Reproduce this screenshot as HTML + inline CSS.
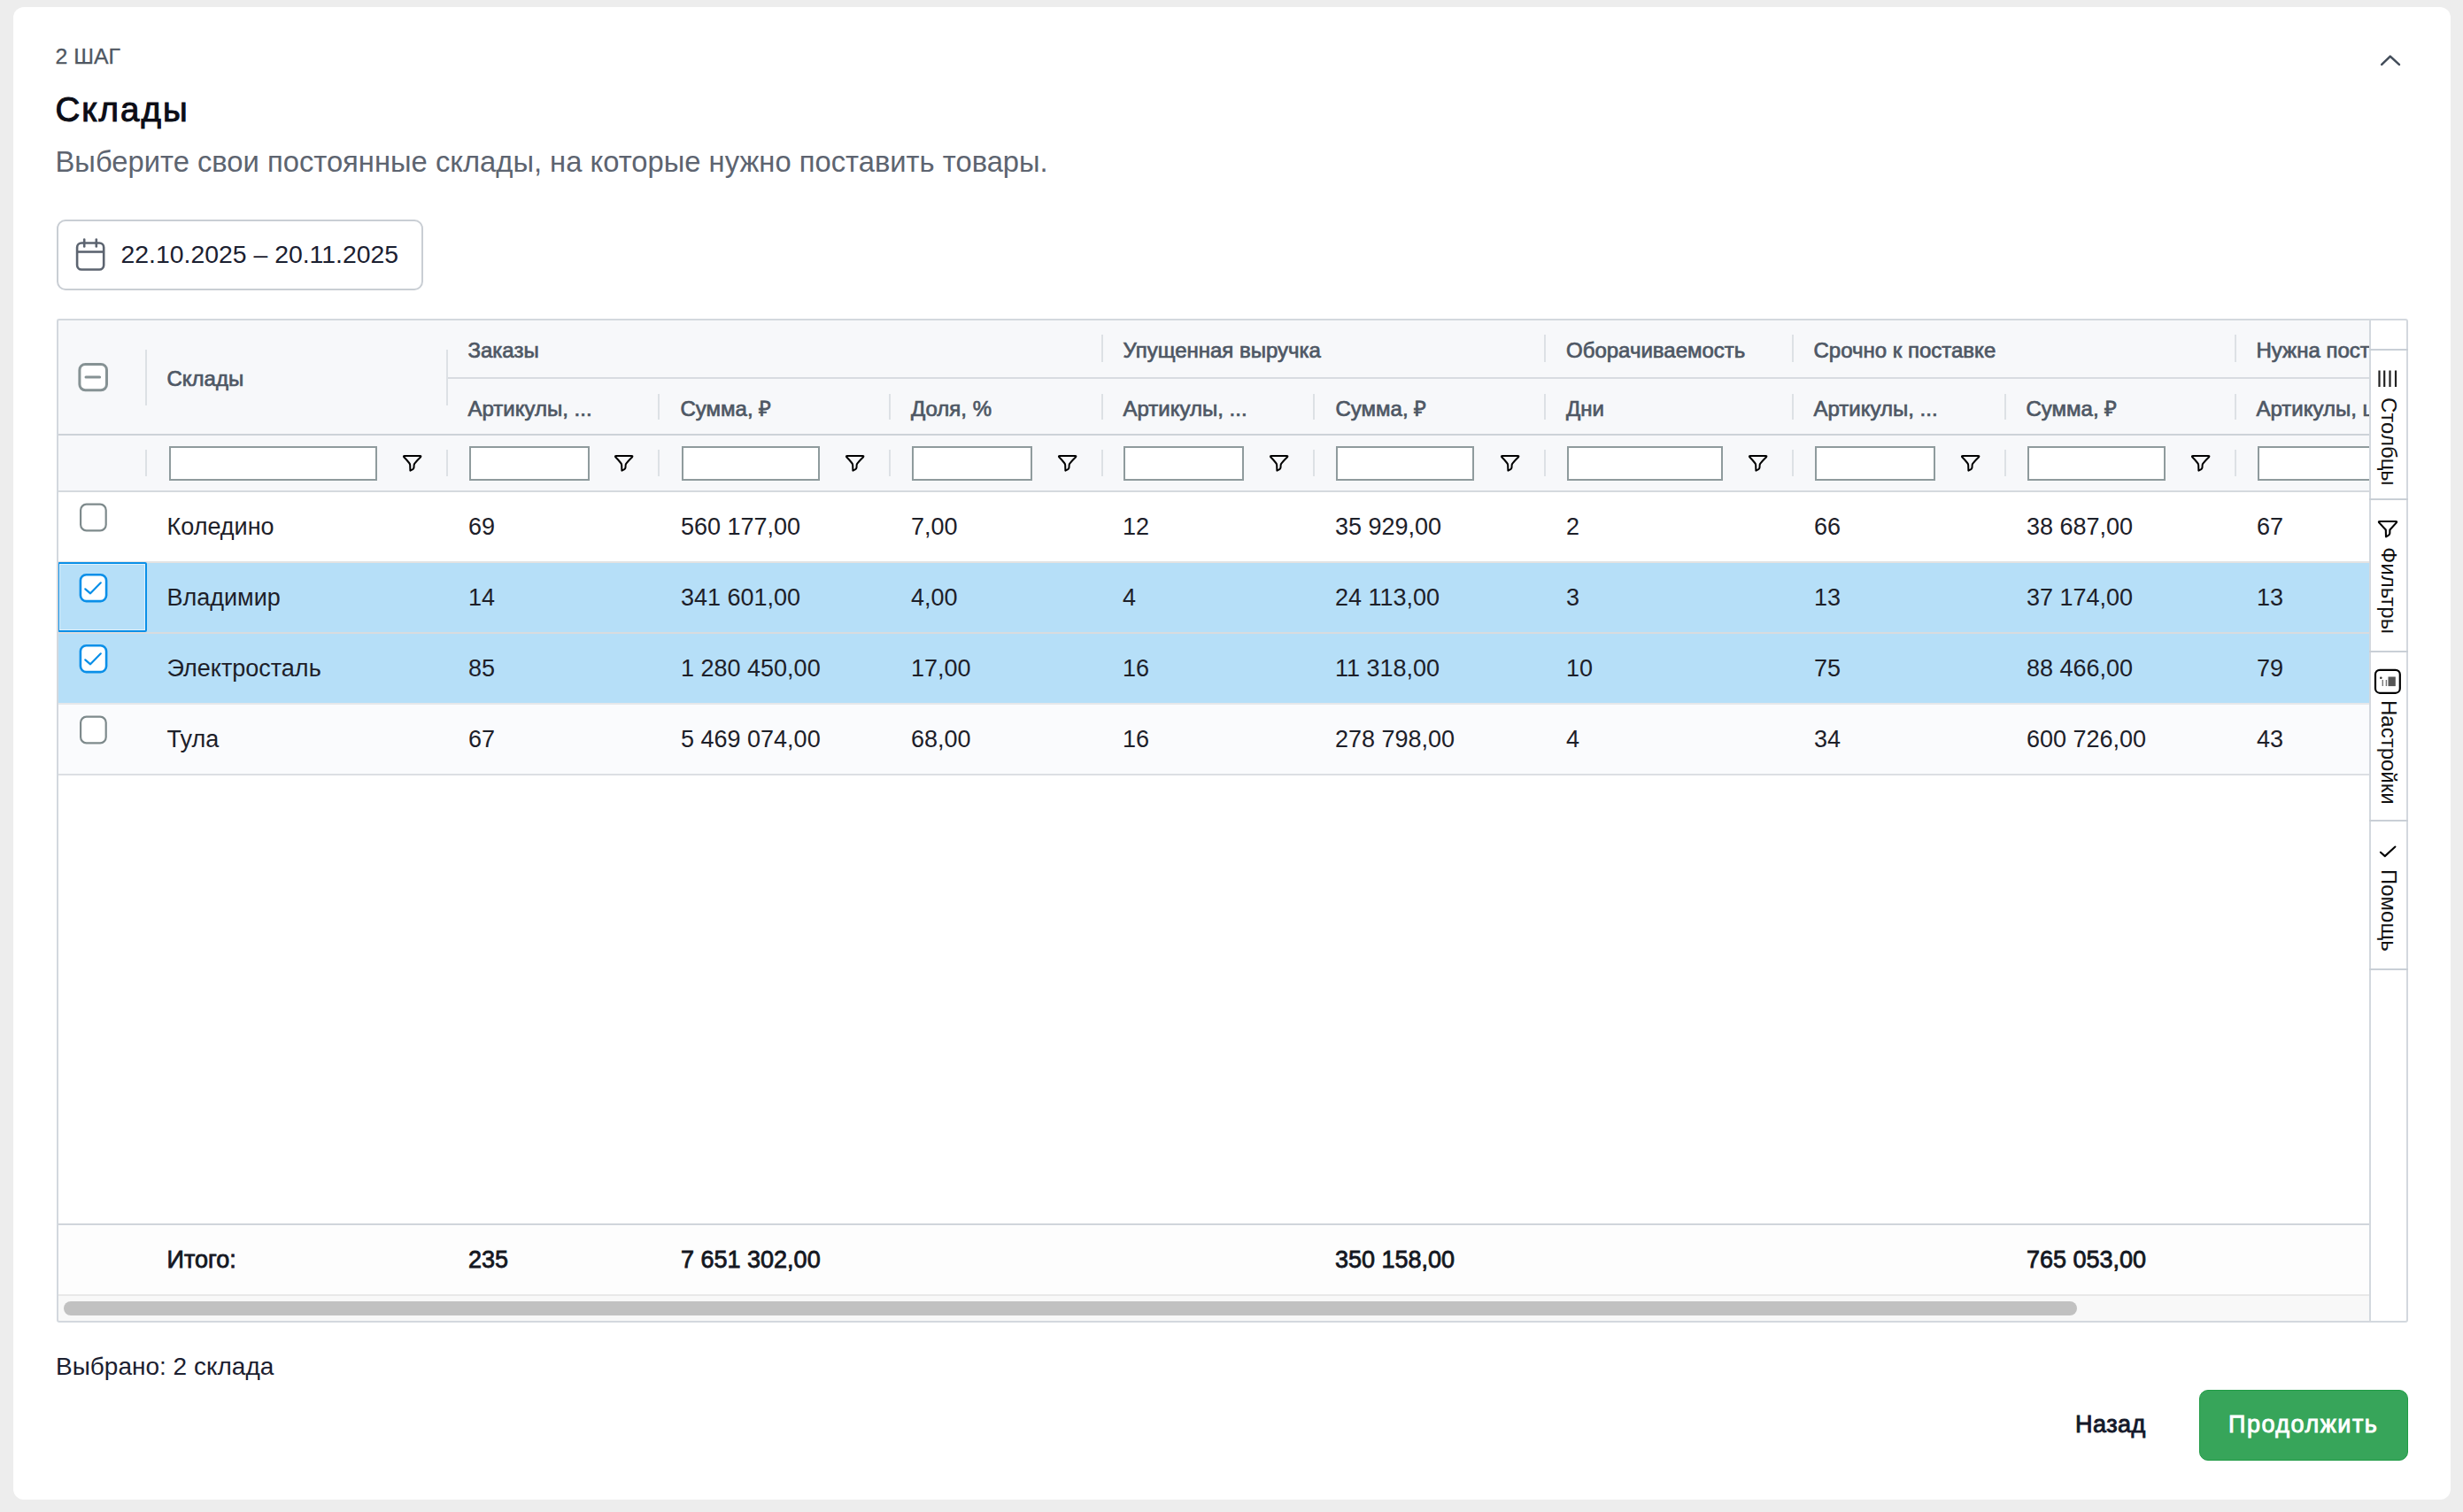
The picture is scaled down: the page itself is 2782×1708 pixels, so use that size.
<!DOCTYPE html>
<html><head><meta charset="utf-8"><title>Склады</title>
<style>
html,body{margin:0;padding:0;}
body{width:2782px;height:1708px;background:#ededed;position:relative;overflow:hidden;font-family:"Liberation Sans", sans-serif;}
.card{position:absolute;left:15px;top:8px;width:2753px;height:1686px;background:#fff;border-radius:12px;}
.t{position:absolute;white-space:nowrap;}
.b{position:absolute;}
.clip{position:absolute;left:0;top:0;width:2676px;height:1708px;overflow:hidden;}
svg.b{overflow:visible;}
</style></head><body>
<div class="card"></div>
<div class="t" style="left:62.5px;top:51.7px;font-size:24.8px;line-height:24.8px;color:#4f5762;font-weight:400;-webkit-text-stroke:0.3px #4f5762">2 ШАГ</div>
<div class="t" style="left:62.5px;top:105.1px;font-size:38.5px;line-height:38.5px;color:#0b0d16;font-weight:400;-webkit-text-stroke:1px #0b0d16;letter-spacing:2px">Склады</div>
<div class="t" style="left:62.5px;top:166.5px;font-size:32.75px;line-height:32.75px;color:#5d6470;font-weight:400;">Выберите свои постоянные склады, на которые нужно поставить товары.</div>
<svg class="b" style="left:2680px;top:50px" width="40" height="40" viewBox="2680 50 40 40"><polyline points="2690.2,72.9 2699.8,63.6 2709.9,72.9" fill="none" stroke="#434d5a" stroke-width="2.6" stroke-linecap="round" stroke-linejoin="round"/></svg>
<div class="b" style="left:64px;top:248px;width:414px;height:80px;box-sizing:border-box;border:2px solid #c9ced4;border-radius:10px;background:#fff"></div>
<svg class="b" style="left:80px;top:262px" width="45" height="50" viewBox="80 262 45 50"><rect x="87.1" y="274.5" width="30.1" height="30" rx="5" fill="none" stroke="#5c6470" stroke-width="2.6"/><line x1="87" y1="284.5" x2="117" y2="284.5" stroke="#5c6470" stroke-width="2.6"/><line x1="95.2" y1="270.5" x2="95.2" y2="278.5" stroke="#5c6470" stroke-width="2.6" stroke-linecap="round"/><line x1="108.8" y1="270.5" x2="108.8" y2="278.5" stroke="#5c6470" stroke-width="2.6" stroke-linecap="round"/></svg>
<div class="t" style="left:136.5px;top:272.5px;font-size:28.4px;line-height:28.4px;color:#1b2030;font-weight:400;">22.10.2025 – 20.11.2025</div>
<div class="clip">
<div class="b" style="left:64px;top:360px;width:2612px;height:196px;background:#f7f8fa"></div>
<div class="b" style="left:64px;top:556px;width:2612px;height:906px;background:#fff"></div>
<div class="b" style="left:64px;top:556px;width:2612px;height:79px;background:#ffffff"></div>
<div class="b" style="left:64px;top:636px;width:2612px;height:79px;background:#b6dff8"></div>
<div class="b" style="left:64px;top:716px;width:2612px;height:79px;background:#b6dff8"></div>
<div class="b" style="left:64px;top:796px;width:2612px;height:79px;background:#fafbfd"></div>
<div class="b" style="left:64px;top:634px;width:2612px;height:1.5px;background:#e3e3e3"></div>
<div class="b" style="left:64px;top:714px;width:2612px;height:1.5px;background:#d9dcdf"></div>
<div class="b" style="left:64px;top:794px;width:2612px;height:1.5px;background:#e6e8ea"></div>
<div class="b" style="left:64px;top:874px;width:2612px;height:2px;background:#dcdfe3"></div>
<div class="b" style="left:64px;top:489.5px;width:2612px;height:2px;background:#cdd2d8"></div>
<div class="b" style="left:64px;top:554px;width:2612px;height:2px;background:#d5d9de"></div>
<div class="b" style="left:504px;top:426px;width:2172px;height:2px;background:#d8dce1"></div>
<div class="b" style="left:64px;top:1382px;width:2612px;height:2px;background:#d0d5db"></div>
<div class="b" style="left:64px;top:1384px;width:2612px;height:78px;background:#fdfdfd"></div>
<div class="b" style="left:64px;top:1462px;width:2612px;height:1.5px;background:#e8e8e8"></div>
<div class="b" style="left:64px;top:1463.5px;width:2612px;height:29.5px;background:#f8f8f8"></div>
<div class="b" style="left:72px;top:1470px;width:2274px;height:16px;background:#c1c1c1;border-radius:8px"></div>
<div class="b" style="left:164px;top:395px;width:2px;height:63px;background:#dde1e5"></div>
<div class="b" style="left:504px;top:395px;width:2px;height:63px;background:#dde1e5"></div>
<div class="b" style="left:1244px;top:378px;width:2px;height:31px;background:#dde1e5"></div>
<div class="b" style="left:1744px;top:378px;width:2px;height:31px;background:#dde1e5"></div>
<div class="b" style="left:2024px;top:378px;width:2px;height:31px;background:#dde1e5"></div>
<div class="b" style="left:2524px;top:378px;width:2px;height:31px;background:#dde1e5"></div>
<div class="b" style="left:743px;top:445px;width:2px;height:29px;background:#dde1e5"></div>
<div class="b" style="left:1004px;top:445px;width:2px;height:29px;background:#dde1e5"></div>
<div class="b" style="left:1244px;top:445px;width:2px;height:29px;background:#dde1e5"></div>
<div class="b" style="left:1483px;top:445px;width:2px;height:29px;background:#dde1e5"></div>
<div class="b" style="left:1744px;top:445px;width:2px;height:29px;background:#dde1e5"></div>
<div class="b" style="left:2024px;top:445px;width:2px;height:29px;background:#dde1e5"></div>
<div class="b" style="left:2264px;top:445px;width:2px;height:29px;background:#dde1e5"></div>
<div class="b" style="left:2524px;top:445px;width:2px;height:29px;background:#dde1e5"></div>
<div class="b" style="left:164px;top:508px;width:2px;height:30px;background:#dde1e5"></div>
<div class="b" style="left:504px;top:508px;width:2px;height:30px;background:#dde1e5"></div>
<div class="b" style="left:743px;top:508px;width:2px;height:30px;background:#dde1e5"></div>
<div class="b" style="left:1004px;top:508px;width:2px;height:30px;background:#dde1e5"></div>
<div class="b" style="left:1244px;top:508px;width:2px;height:30px;background:#dde1e5"></div>
<div class="b" style="left:1483px;top:508px;width:2px;height:30px;background:#dde1e5"></div>
<div class="b" style="left:1744px;top:508px;width:2px;height:30px;background:#dde1e5"></div>
<div class="b" style="left:2024px;top:508px;width:2px;height:30px;background:#dde1e5"></div>
<div class="b" style="left:2264px;top:508px;width:2px;height:30px;background:#dde1e5"></div>
<div class="b" style="left:2524px;top:508px;width:2px;height:30px;background:#dde1e5"></div>
<div class="t" style="left:188.5px;top:416.1px;font-size:24px;line-height:24px;color:#4e5764;font-weight:400;-webkit-text-stroke:0.7px #4e5764">Склады</div>
<div class="t" style="left:528.5px;top:383.6px;font-size:24px;line-height:24px;color:#4e5764;font-weight:400;-webkit-text-stroke:0.7px #4e5764">Заказы</div>
<div class="t" style="left:1268.5px;top:383.6px;font-size:24px;line-height:24px;color:#4e5764;font-weight:400;-webkit-text-stroke:0.7px #4e5764">Упущенная выручка</div>
<div class="t" style="left:1769.0px;top:383.6px;font-size:24px;line-height:24px;color:#4e5764;font-weight:400;-webkit-text-stroke:0.7px #4e5764">Оборачиваемость</div>
<div class="t" style="left:2048.5px;top:383.6px;font-size:24px;line-height:24px;color:#4e5764;font-weight:400;-webkit-text-stroke:0.7px #4e5764">Срочно к поставке</div>
<div class="t" style="left:2548.5px;top:383.6px;font-size:24px;line-height:24px;color:#4e5764;font-weight:400;-webkit-text-stroke:0.7px #4e5764">Нужна поставка</div>
<div class="t" style="left:528.5px;top:449.6px;font-size:24px;line-height:24px;color:#4e5764;font-weight:400;-webkit-text-stroke:0.7px #4e5764">Артикулы, ...</div>
<div class="t" style="left:768.5px;top:449.6px;font-size:24px;line-height:24px;color:#4e5764;font-weight:400;-webkit-text-stroke:0.7px #4e5764">Сумма, ₽</div>
<div class="t" style="left:1029.0px;top:449.6px;font-size:24px;line-height:24px;color:#4e5764;font-weight:400;-webkit-text-stroke:0.7px #4e5764">Доля, %</div>
<div class="t" style="left:1268.5px;top:449.6px;font-size:24px;line-height:24px;color:#4e5764;font-weight:400;-webkit-text-stroke:0.7px #4e5764">Артикулы, ...</div>
<div class="t" style="left:1508.5px;top:449.6px;font-size:24px;line-height:24px;color:#4e5764;font-weight:400;-webkit-text-stroke:0.7px #4e5764">Сумма, ₽</div>
<div class="t" style="left:1769.0px;top:449.6px;font-size:24px;line-height:24px;color:#4e5764;font-weight:400;-webkit-text-stroke:0.7px #4e5764">Дни</div>
<div class="t" style="left:2048.5px;top:449.6px;font-size:24px;line-height:24px;color:#4e5764;font-weight:400;-webkit-text-stroke:0.7px #4e5764">Артикулы, ...</div>
<div class="t" style="left:2288.5px;top:449.6px;font-size:24px;line-height:24px;color:#4e5764;font-weight:400;-webkit-text-stroke:0.7px #4e5764">Сумма, ₽</div>
<div class="t" style="left:2548.5px;top:449.6px;font-size:24px;line-height:24px;color:#4e5764;font-weight:400;-webkit-text-stroke:0.7px #4e5764">Артикулы, шт</div>
<div class="b" style="left:191px;top:504px;width:235px;height:39px;box-sizing:border-box;border:2px solid #8f9b9d;background:#fff"></div>
<svg class="b" style="left:454px;top:510px" width="26" height="26" viewBox="0 0 26 26"><path d="M2.2,6.3 Q1.4,4.9 3,4.9 L20.4,4.9 Q22,4.9 21.1,6.3 Q16.8,10.6 14.3,13.6 Q13.6,14.6 13.6,16 L13.5,18.2 Q13.4,19.4 12.3,20.1 L9.4,21.6 L9.2,15.6 Q9.2,14.2 8.2,13 Q5.8,10 2.2,6.3 Z" fill="none" stroke="#000" stroke-width="2" stroke-linejoin="round"/></svg>
<div class="b" style="left:530px;top:504px;width:136px;height:39px;box-sizing:border-box;border:2px solid #8f9b9d;background:#fff"></div>
<svg class="b" style="left:693px;top:510px" width="26" height="26" viewBox="0 0 26 26"><path d="M2.2,6.3 Q1.4,4.9 3,4.9 L20.4,4.9 Q22,4.9 21.1,6.3 Q16.8,10.6 14.3,13.6 Q13.6,14.6 13.6,16 L13.5,18.2 Q13.4,19.4 12.3,20.1 L9.4,21.6 L9.2,15.6 Q9.2,14.2 8.2,13 Q5.8,10 2.2,6.3 Z" fill="none" stroke="#000" stroke-width="2" stroke-linejoin="round"/></svg>
<div class="b" style="left:770px;top:504px;width:156px;height:39px;box-sizing:border-box;border:2px solid #8f9b9d;background:#fff"></div>
<svg class="b" style="left:954px;top:510px" width="26" height="26" viewBox="0 0 26 26"><path d="M2.2,6.3 Q1.4,4.9 3,4.9 L20.4,4.9 Q22,4.9 21.1,6.3 Q16.8,10.6 14.3,13.6 Q13.6,14.6 13.6,16 L13.5,18.2 Q13.4,19.4 12.3,20.1 L9.4,21.6 L9.2,15.6 Q9.2,14.2 8.2,13 Q5.8,10 2.2,6.3 Z" fill="none" stroke="#000" stroke-width="2" stroke-linejoin="round"/></svg>
<div class="b" style="left:1030px;top:504px;width:136px;height:39px;box-sizing:border-box;border:2px solid #8f9b9d;background:#fff"></div>
<svg class="b" style="left:1194px;top:510px" width="26" height="26" viewBox="0 0 26 26"><path d="M2.2,6.3 Q1.4,4.9 3,4.9 L20.4,4.9 Q22,4.9 21.1,6.3 Q16.8,10.6 14.3,13.6 Q13.6,14.6 13.6,16 L13.5,18.2 Q13.4,19.4 12.3,20.1 L9.4,21.6 L9.2,15.6 Q9.2,14.2 8.2,13 Q5.8,10 2.2,6.3 Z" fill="none" stroke="#000" stroke-width="2" stroke-linejoin="round"/></svg>
<div class="b" style="left:1269px;top:504px;width:136px;height:39px;box-sizing:border-box;border:2px solid #8f9b9d;background:#fff"></div>
<svg class="b" style="left:1433px;top:510px" width="26" height="26" viewBox="0 0 26 26"><path d="M2.2,6.3 Q1.4,4.9 3,4.9 L20.4,4.9 Q22,4.9 21.1,6.3 Q16.8,10.6 14.3,13.6 Q13.6,14.6 13.6,16 L13.5,18.2 Q13.4,19.4 12.3,20.1 L9.4,21.6 L9.2,15.6 Q9.2,14.2 8.2,13 Q5.8,10 2.2,6.3 Z" fill="none" stroke="#000" stroke-width="2" stroke-linejoin="round"/></svg>
<div class="b" style="left:1509px;top:504px;width:156px;height:39px;box-sizing:border-box;border:2px solid #8f9b9d;background:#fff"></div>
<svg class="b" style="left:1694px;top:510px" width="26" height="26" viewBox="0 0 26 26"><path d="M2.2,6.3 Q1.4,4.9 3,4.9 L20.4,4.9 Q22,4.9 21.1,6.3 Q16.8,10.6 14.3,13.6 Q13.6,14.6 13.6,16 L13.5,18.2 Q13.4,19.4 12.3,20.1 L9.4,21.6 L9.2,15.6 Q9.2,14.2 8.2,13 Q5.8,10 2.2,6.3 Z" fill="none" stroke="#000" stroke-width="2" stroke-linejoin="round"/></svg>
<div class="b" style="left:1770px;top:504px;width:176px;height:39px;box-sizing:border-box;border:2px solid #8f9b9d;background:#fff"></div>
<svg class="b" style="left:1974px;top:510px" width="26" height="26" viewBox="0 0 26 26"><path d="M2.2,6.3 Q1.4,4.9 3,4.9 L20.4,4.9 Q22,4.9 21.1,6.3 Q16.8,10.6 14.3,13.6 Q13.6,14.6 13.6,16 L13.5,18.2 Q13.4,19.4 12.3,20.1 L9.4,21.6 L9.2,15.6 Q9.2,14.2 8.2,13 Q5.8,10 2.2,6.3 Z" fill="none" stroke="#000" stroke-width="2" stroke-linejoin="round"/></svg>
<div class="b" style="left:2050px;top:504px;width:136px;height:39px;box-sizing:border-box;border:2px solid #8f9b9d;background:#fff"></div>
<svg class="b" style="left:2214px;top:510px" width="26" height="26" viewBox="0 0 26 26"><path d="M2.2,6.3 Q1.4,4.9 3,4.9 L20.4,4.9 Q22,4.9 21.1,6.3 Q16.8,10.6 14.3,13.6 Q13.6,14.6 13.6,16 L13.5,18.2 Q13.4,19.4 12.3,20.1 L9.4,21.6 L9.2,15.6 Q9.2,14.2 8.2,13 Q5.8,10 2.2,6.3 Z" fill="none" stroke="#000" stroke-width="2" stroke-linejoin="round"/></svg>
<div class="b" style="left:2290px;top:504px;width:156px;height:39px;box-sizing:border-box;border:2px solid #8f9b9d;background:#fff"></div>
<svg class="b" style="left:2474px;top:510px" width="26" height="26" viewBox="0 0 26 26"><path d="M2.2,6.3 Q1.4,4.9 3,4.9 L20.4,4.9 Q22,4.9 21.1,6.3 Q16.8,10.6 14.3,13.6 Q13.6,14.6 13.6,16 L13.5,18.2 Q13.4,19.4 12.3,20.1 L9.4,21.6 L9.2,15.6 Q9.2,14.2 8.2,13 Q5.8,10 2.2,6.3 Z" fill="none" stroke="#000" stroke-width="2" stroke-linejoin="round"/></svg>
<div class="b" style="left:2550px;top:504px;width:136px;height:39px;box-sizing:border-box;border:2px solid #8f9b9d;background:#fff"></div>
<svg class="b" style="left:2714px;top:510px" width="26" height="26" viewBox="0 0 26 26"><path d="M2.2,6.3 Q1.4,4.9 3,4.9 L20.4,4.9 Q22,4.9 21.1,6.3 Q16.8,10.6 14.3,13.6 Q13.6,14.6 13.6,16 L13.5,18.2 Q13.4,19.4 12.3,20.1 L9.4,21.6 L9.2,15.6 Q9.2,14.2 8.2,13 Q5.8,10 2.2,6.3 Z" fill="none" stroke="#000" stroke-width="2" stroke-linejoin="round"/></svg>
<svg class="b" style="left:80px;top:400px" width="50" height="50" viewBox="80 400 50 50"><rect x="89.9" y="411.4" width="30.6" height="29.4" rx="6.5" fill="#fff" stroke="#869294" stroke-width="3"/><line x1="97" y1="425.9" x2="112.6" y2="425.9" stroke="#869294" stroke-width="3" stroke-linecap="round"/></svg>
<div class="t" style="left:188.5px;top:581.5px;font-size:27px;line-height:27px;color:#1d2029;font-weight:400;">Коледино</div>
<div class="t" style="left:529.0px;top:581.5px;font-size:27px;line-height:27px;color:#1d2029;font-weight:400;">69</div>
<div class="t" style="left:769.0px;top:581.5px;font-size:27px;line-height:27px;color:#1d2029;font-weight:400;">560 177,00</div>
<div class="t" style="left:1029.0px;top:581.5px;font-size:27px;line-height:27px;color:#1d2029;font-weight:400;">7,00</div>
<div class="t" style="left:1268.0px;top:581.5px;font-size:27px;line-height:27px;color:#1d2029;font-weight:400;">12</div>
<div class="t" style="left:1508.0px;top:581.5px;font-size:27px;line-height:27px;color:#1d2029;font-weight:400;">35 929,00</div>
<div class="t" style="left:1769.0px;top:581.5px;font-size:27px;line-height:27px;color:#1d2029;font-weight:400;">2</div>
<div class="t" style="left:2049.0px;top:581.5px;font-size:27px;line-height:27px;color:#1d2029;font-weight:400;">66</div>
<div class="t" style="left:2289.0px;top:581.5px;font-size:27px;line-height:27px;color:#1d2029;font-weight:400;">38 687,00</div>
<div class="t" style="left:2549.0px;top:581.5px;font-size:27px;line-height:27px;color:#1d2029;font-weight:400;">67</div>
<svg class="b" style="left:80px;top:559px" width="52" height="52" viewBox="80 559 52 52"><rect x="91.1" y="569.7" width="28.6" height="29.6" rx="6.5" fill="#fff" stroke="#7e8a8c" stroke-width="2.2"/></svg>
<div class="t" style="left:188.5px;top:661.5px;font-size:27px;line-height:27px;color:#1d2029;font-weight:400;">Владимир</div>
<div class="t" style="left:529.0px;top:661.5px;font-size:27px;line-height:27px;color:#1d2029;font-weight:400;">14</div>
<div class="t" style="left:769.0px;top:661.5px;font-size:27px;line-height:27px;color:#1d2029;font-weight:400;">341 601,00</div>
<div class="t" style="left:1029.0px;top:661.5px;font-size:27px;line-height:27px;color:#1d2029;font-weight:400;">4,00</div>
<div class="t" style="left:1268.0px;top:661.5px;font-size:27px;line-height:27px;color:#1d2029;font-weight:400;">4</div>
<div class="t" style="left:1508.0px;top:661.5px;font-size:27px;line-height:27px;color:#1d2029;font-weight:400;">24 113,00</div>
<div class="t" style="left:1769.0px;top:661.5px;font-size:27px;line-height:27px;color:#1d2029;font-weight:400;">3</div>
<div class="t" style="left:2049.0px;top:661.5px;font-size:27px;line-height:27px;color:#1d2029;font-weight:400;">13</div>
<div class="t" style="left:2289.0px;top:661.5px;font-size:27px;line-height:27px;color:#1d2029;font-weight:400;">37 174,00</div>
<div class="t" style="left:2549.0px;top:661.5px;font-size:27px;line-height:27px;color:#1d2029;font-weight:400;">13</div>
<svg class="b" style="left:80px;top:639px" width="52" height="52" viewBox="80 639 52 52"><rect x="90.9" y="649.3" width="29.2" height="29.8" rx="6.5" fill="#fff" stroke="#0a8fe8" stroke-width="2.6"/><polyline points="96.3,665.3 102.1,670.3 113.8,658.3" fill="none" stroke="#0a8fe8" stroke-width="2.2" stroke-linecap="round" stroke-linejoin="round"/></svg>
<div class="t" style="left:188.5px;top:741.5px;font-size:27px;line-height:27px;color:#1d2029;font-weight:400;">Электросталь</div>
<div class="t" style="left:529.0px;top:741.5px;font-size:27px;line-height:27px;color:#1d2029;font-weight:400;">85</div>
<div class="t" style="left:769.0px;top:741.5px;font-size:27px;line-height:27px;color:#1d2029;font-weight:400;">1 280 450,00</div>
<div class="t" style="left:1029.0px;top:741.5px;font-size:27px;line-height:27px;color:#1d2029;font-weight:400;">17,00</div>
<div class="t" style="left:1268.0px;top:741.5px;font-size:27px;line-height:27px;color:#1d2029;font-weight:400;">16</div>
<div class="t" style="left:1508.0px;top:741.5px;font-size:27px;line-height:27px;color:#1d2029;font-weight:400;">11 318,00</div>
<div class="t" style="left:1769.0px;top:741.5px;font-size:27px;line-height:27px;color:#1d2029;font-weight:400;">10</div>
<div class="t" style="left:2049.0px;top:741.5px;font-size:27px;line-height:27px;color:#1d2029;font-weight:400;">75</div>
<div class="t" style="left:2289.0px;top:741.5px;font-size:27px;line-height:27px;color:#1d2029;font-weight:400;">88 466,00</div>
<div class="t" style="left:2549.0px;top:741.5px;font-size:27px;line-height:27px;color:#1d2029;font-weight:400;">79</div>
<svg class="b" style="left:80px;top:719px" width="52" height="52" viewBox="80 719 52 52"><rect x="90.9" y="729.3" width="29.2" height="29.8" rx="6.5" fill="#fff" stroke="#0a8fe8" stroke-width="2.6"/><polyline points="96.3,745.3 102.1,750.3 113.8,738.3" fill="none" stroke="#0a8fe8" stroke-width="2.2" stroke-linecap="round" stroke-linejoin="round"/></svg>
<div class="t" style="left:188.5px;top:821.5px;font-size:27px;line-height:27px;color:#1d2029;font-weight:400;">Тула</div>
<div class="t" style="left:529.0px;top:821.5px;font-size:27px;line-height:27px;color:#1d2029;font-weight:400;">67</div>
<div class="t" style="left:769.0px;top:821.5px;font-size:27px;line-height:27px;color:#1d2029;font-weight:400;">5 469 074,00</div>
<div class="t" style="left:1029.0px;top:821.5px;font-size:27px;line-height:27px;color:#1d2029;font-weight:400;">68,00</div>
<div class="t" style="left:1268.0px;top:821.5px;font-size:27px;line-height:27px;color:#1d2029;font-weight:400;">16</div>
<div class="t" style="left:1508.0px;top:821.5px;font-size:27px;line-height:27px;color:#1d2029;font-weight:400;">278 798,00</div>
<div class="t" style="left:1769.0px;top:821.5px;font-size:27px;line-height:27px;color:#1d2029;font-weight:400;">4</div>
<div class="t" style="left:2049.0px;top:821.5px;font-size:27px;line-height:27px;color:#1d2029;font-weight:400;">34</div>
<div class="t" style="left:2289.0px;top:821.5px;font-size:27px;line-height:27px;color:#1d2029;font-weight:400;">600 726,00</div>
<div class="t" style="left:2549.0px;top:821.5px;font-size:27px;line-height:27px;color:#1d2029;font-weight:400;">43</div>
<svg class="b" style="left:80px;top:799px" width="52" height="52" viewBox="80 799 52 52"><rect x="91.1" y="809.7" width="28.6" height="29.6" rx="6.5" fill="#fff" stroke="#7e8a8c" stroke-width="2.2"/></svg>
<div class="b" style="left:65px;top:635px;width:101px;height:79px;box-sizing:border-box;border:2.7px solid #0a8fe8;border-radius:2px;box-shadow:inset 0 0 0 1px rgba(255,255,255,0.55)"></div>
<div class="t" style="left:188.5px;top:1410.0px;font-size:27px;line-height:27px;color:#14171f;font-weight:400;-webkit-text-stroke:0.8px #14171f">Итого:</div>
<div class="t" style="left:529.0px;top:1410.0px;font-size:27px;line-height:27px;color:#14171f;font-weight:400;-webkit-text-stroke:0.8px #14171f">235</div>
<div class="t" style="left:769.0px;top:1410.0px;font-size:27px;line-height:27px;color:#14171f;font-weight:400;-webkit-text-stroke:0.8px #14171f">7 651 302,00</div>
<div class="t" style="left:1508.0px;top:1410.0px;font-size:27px;line-height:27px;color:#14171f;font-weight:400;-webkit-text-stroke:0.8px #14171f">350 158,00</div>
<div class="t" style="left:2289.0px;top:1410.0px;font-size:27px;line-height:27px;color:#14171f;font-weight:400;-webkit-text-stroke:0.8px #14171f">765 053,00</div>
</div>
<div class="b" style="left:64px;top:360px;width:2656px;height:1134px;box-sizing:border-box;border:2px solid #d3d8de;border-radius:3px"></div>
<div class="b" style="left:2676px;top:360px;width:2px;height:1134px;background:#d3d8de"></div>
<div class="b" style="left:2676px;top:394px;width:44px;height:2px;background:#c9cfd6"></div>
<div class="b" style="left:2676px;top:563px;width:44px;height:2px;background:#c9cfd6"></div>
<div class="b" style="left:2676px;top:735px;width:44px;height:2px;background:#c9cfd6"></div>
<div class="b" style="left:2676px;top:926px;width:44px;height:2px;background:#c9cfd6"></div>
<div class="b" style="left:2676px;top:1094px;width:44px;height:2px;background:#c9cfd6"></div>
<svg class="b" style="left:2680px;top:412px" width="34" height="32" viewBox="2680 412 34 32"><line x1="2687.5" y1="418.5" x2="2687.5" y2="437" stroke="#222" stroke-width="2.2"/><line x1="2693.2" y1="418.5" x2="2693.2" y2="437" stroke="#222" stroke-width="2.2"/><line x1="2699.5" y1="418.5" x2="2699.5" y2="437" stroke="#222" stroke-width="2.2"/><line x1="2706" y1="418.5" x2="2706" y2="437" stroke="#222" stroke-width="2.2"/></svg>
<div class="t" style="left:2685px;top:449px;font-size:24px;line-height:26px;color:#111;writing-mode:vertical-rl">Столбцы</div>
<svg class="b" style="left:2680px;top:582px" width="34" height="30" viewBox="2680 582 34 30"><path d="M2687.2,590.4 Q2686.2,589 2688,589 L2706,589 Q2707.8,589 2706.8,590.4 L2699.4,598.5 L2699.3,602.5 Q2699,604 2697.6,604.8 L2695,606.3 L2694.8,598.5 Z" fill="none" stroke="#000" stroke-width="2.1" stroke-linejoin="round"/></svg>
<div class="t" style="left:2685px;top:618px;font-size:24px;line-height:26px;color:#111;writing-mode:vertical-rl">Фильтры</div>
<svg class="b" style="left:2678px;top:750px" width="40" height="40" viewBox="2678 750 40 40"><rect x="2683" y="756.8" width="27.8" height="26" rx="5" fill="none" stroke="#000" stroke-width="2.2"/><circle cx="2689.3" cy="765.8" r="1.3" fill="#333"/><line x1="2691.3" y1="768" x2="2691.3" y2="775" stroke="#777" stroke-width="1.4"/><line x1="2695.4" y1="768" x2="2695.4" y2="775" stroke="#777" stroke-width="1.4"/><rect x="2697.5" y="764.5" width="8.3" height="10.6" fill="#555"/></svg>
<div class="t" style="left:2685px;top:791px;font-size:24px;line-height:26px;color:#111;writing-mode:vertical-rl">Настройки</div>
<svg class="b" style="left:2680px;top:948px" width="34" height="26" viewBox="2680 948 34 26"><polyline points="2688.9,962.8 2693.8,967.1 2705.4,956.5" fill="none" stroke="#000" stroke-width="2.1" stroke-linecap="round" stroke-linejoin="round"/></svg>
<div class="t" style="left:2685px;top:982px;font-size:24px;line-height:26px;color:#111;writing-mode:vertical-rl">Помощь</div>
<div class="t" style="left:63.0px;top:1529.7px;font-size:28px;line-height:28px;color:#1b2030;font-weight:400;">Выбрано: 2 склада</div>
<div class="t" style="left:2344.0px;top:1595.5px;font-size:27px;line-height:27px;color:#14182a;font-weight:400;-webkit-text-stroke:0.9px #14182a;letter-spacing:0.5px">Назад</div>
<div class="b" style="left:2484px;top:1570px;width:236px;height:80px;box-sizing:border-box;background:#37a55a;border:1.5px solid #1f9b45;border-radius:10px"></div>
<div class="t" style="left:2517.0px;top:1595.5px;font-size:27px;line-height:27px;color:#ffffff;font-weight:400;-webkit-text-stroke:0.9px #ffffff;letter-spacing:1.5px">Продолжить</div>
</body></html>
